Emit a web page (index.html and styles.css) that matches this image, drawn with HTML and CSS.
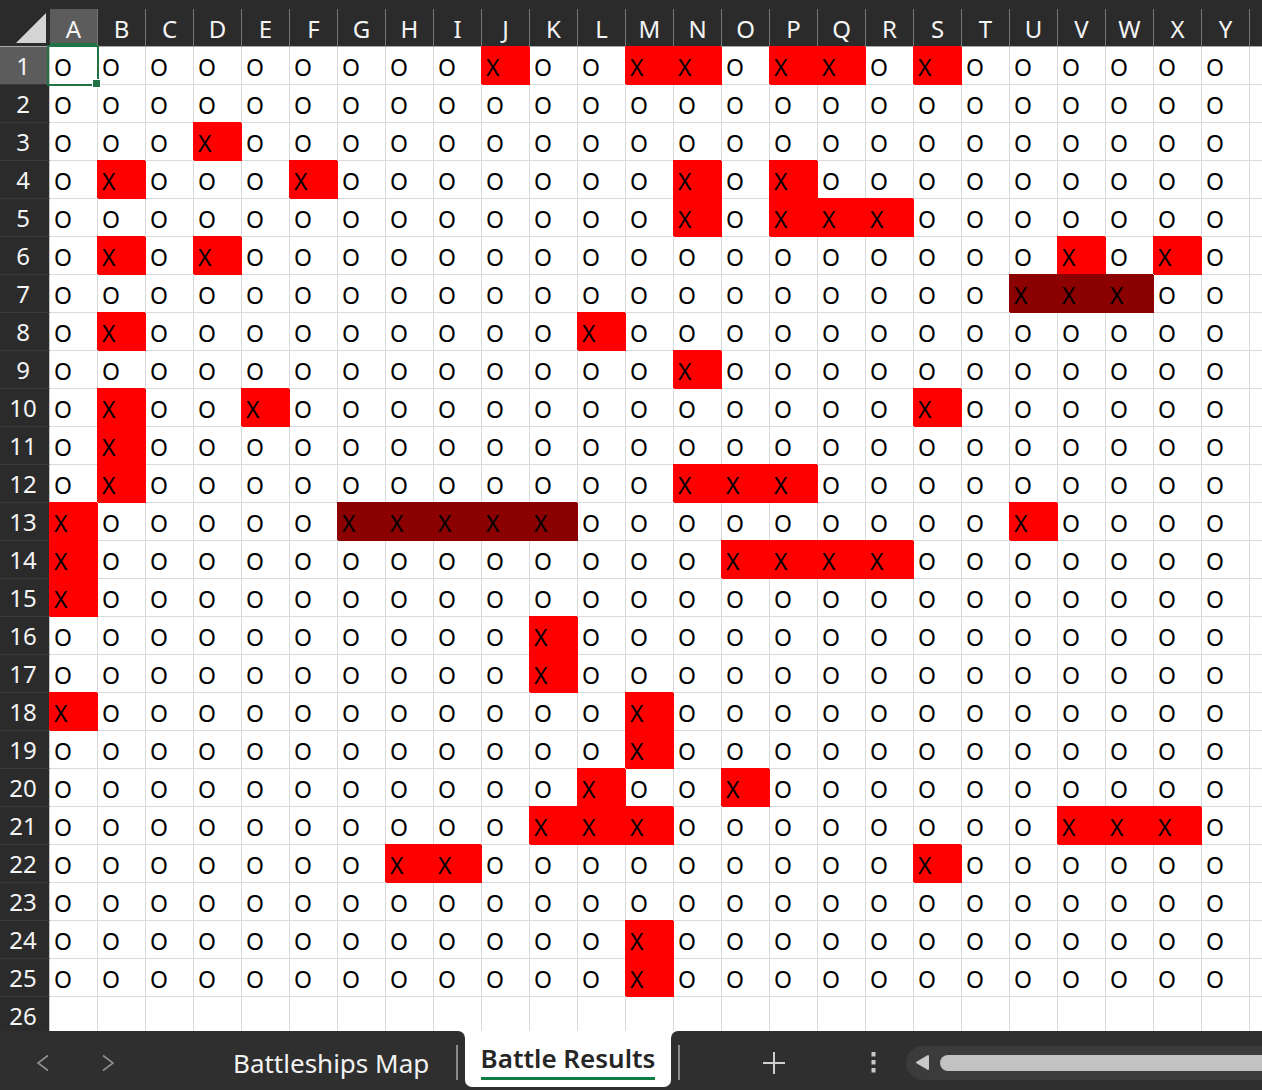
FILE: index.html
```html
<!DOCTYPE html>
<html lang="en">
<head>
<meta charset="utf-8">
<title>Battle Results</title>
<link rel="stylesheet" href="styles.css">
</head>
<body>
<div class="app">
  <div class="ribbon-edge"></div>
  <div class="sheet">
    <div class="row cols">
      <span class="corner"><svg width="50" height="37" viewBox="0 0 50 37"><polygon points="16,34 46,34 46,4" fill="#d4d4d4"/></svg></span>
      <span class="sel">A</span><span>B</span><span>C</span><span>D</span><span>E</span><span>F</span><span>G</span><span>H</span><span>I</span><span>J</span><span>K</span><span>L</span><span>M</span><span>N</span><span>O</span><span>P</span><span>Q</span><span>R</span><span>S</span><span>T</span><span>U</span><span>V</span><span>W</span><span>X</span><span>Y</span><span></span>
    </div>
    <div class="row"><span class="rh sel">1</span><span>O</span><span>O</span><span>O</span><span>O</span><span>O</span><span>O</span><span>O</span><span>O</span><span>O</span><span class="h">X</span><span>O</span><span>O</span><span class="h">X</span><span class="h">X</span><span>O</span><span class="h">X</span><span class="h">X</span><span>O</span><span class="h">X</span><span>O</span><span>O</span><span>O</span><span>O</span><span>O</span><span>O</span><span></span></div>
    <div class="row"><span class="rh">2</span><span>O</span><span>O</span><span>O</span><span>O</span><span>O</span><span>O</span><span>O</span><span>O</span><span>O</span><span>O</span><span>O</span><span>O</span><span>O</span><span>O</span><span>O</span><span>O</span><span>O</span><span>O</span><span>O</span><span>O</span><span>O</span><span>O</span><span>O</span><span>O</span><span>O</span><span></span></div>
    <div class="row"><span class="rh">3</span><span>O</span><span>O</span><span>O</span><span class="h">X</span><span>O</span><span>O</span><span>O</span><span>O</span><span>O</span><span>O</span><span>O</span><span>O</span><span>O</span><span>O</span><span>O</span><span>O</span><span>O</span><span>O</span><span>O</span><span>O</span><span>O</span><span>O</span><span>O</span><span>O</span><span>O</span><span></span></div>
    <div class="row"><span class="rh">4</span><span>O</span><span class="h">X</span><span>O</span><span>O</span><span>O</span><span class="h">X</span><span>O</span><span>O</span><span>O</span><span>O</span><span>O</span><span>O</span><span>O</span><span class="h">X</span><span>O</span><span class="h">X</span><span>O</span><span>O</span><span>O</span><span>O</span><span>O</span><span>O</span><span>O</span><span>O</span><span>O</span><span></span></div>
    <div class="row"><span class="rh">5</span><span>O</span><span>O</span><span>O</span><span>O</span><span>O</span><span>O</span><span>O</span><span>O</span><span>O</span><span>O</span><span>O</span><span>O</span><span>O</span><span class="h">X</span><span>O</span><span class="h">X</span><span class="h">X</span><span class="h">X</span><span>O</span><span>O</span><span>O</span><span>O</span><span>O</span><span>O</span><span>O</span><span></span></div>
    <div class="row"><span class="rh">6</span><span>O</span><span class="h">X</span><span>O</span><span class="h">X</span><span>O</span><span>O</span><span>O</span><span>O</span><span>O</span><span>O</span><span>O</span><span>O</span><span>O</span><span>O</span><span>O</span><span>O</span><span>O</span><span>O</span><span>O</span><span>O</span><span>O</span><span class="h">X</span><span>O</span><span class="h">X</span><span>O</span><span></span></div>
    <div class="row"><span class="rh">7</span><span>O</span><span>O</span><span>O</span><span>O</span><span>O</span><span>O</span><span>O</span><span>O</span><span>O</span><span>O</span><span>O</span><span>O</span><span>O</span><span>O</span><span>O</span><span>O</span><span>O</span><span>O</span><span>O</span><span>O</span><span class="s">X</span><span class="s">X</span><span class="s">X</span><span>O</span><span>O</span><span></span></div>
    <div class="row"><span class="rh">8</span><span>O</span><span class="h">X</span><span>O</span><span>O</span><span>O</span><span>O</span><span>O</span><span>O</span><span>O</span><span>O</span><span>O</span><span class="h">X</span><span>O</span><span>O</span><span>O</span><span>O</span><span>O</span><span>O</span><span>O</span><span>O</span><span>O</span><span>O</span><span>O</span><span>O</span><span>O</span><span></span></div>
    <div class="row"><span class="rh">9</span><span>O</span><span>O</span><span>O</span><span>O</span><span>O</span><span>O</span><span>O</span><span>O</span><span>O</span><span>O</span><span>O</span><span>O</span><span>O</span><span class="h">X</span><span>O</span><span>O</span><span>O</span><span>O</span><span>O</span><span>O</span><span>O</span><span>O</span><span>O</span><span>O</span><span>O</span><span></span></div>
    <div class="row"><span class="rh">10</span><span>O</span><span class="h">X</span><span>O</span><span>O</span><span class="h">X</span><span>O</span><span>O</span><span>O</span><span>O</span><span>O</span><span>O</span><span>O</span><span>O</span><span>O</span><span>O</span><span>O</span><span>O</span><span>O</span><span class="h">X</span><span>O</span><span>O</span><span>O</span><span>O</span><span>O</span><span>O</span><span></span></div>
    <div class="row"><span class="rh">11</span><span>O</span><span class="h">X</span><span>O</span><span>O</span><span>O</span><span>O</span><span>O</span><span>O</span><span>O</span><span>O</span><span>O</span><span>O</span><span>O</span><span>O</span><span>O</span><span>O</span><span>O</span><span>O</span><span>O</span><span>O</span><span>O</span><span>O</span><span>O</span><span>O</span><span>O</span><span></span></div>
    <div class="row"><span class="rh">12</span><span>O</span><span class="h">X</span><span>O</span><span>O</span><span>O</span><span>O</span><span>O</span><span>O</span><span>O</span><span>O</span><span>O</span><span>O</span><span>O</span><span class="h">X</span><span class="h">X</span><span class="h">X</span><span>O</span><span>O</span><span>O</span><span>O</span><span>O</span><span>O</span><span>O</span><span>O</span><span>O</span><span></span></div>
    <div class="row"><span class="rh">13</span><span class="h">X</span><span>O</span><span>O</span><span>O</span><span>O</span><span>O</span><span class="s">X</span><span class="s">X</span><span class="s">X</span><span class="s">X</span><span class="s">X</span><span>O</span><span>O</span><span>O</span><span>O</span><span>O</span><span>O</span><span>O</span><span>O</span><span>O</span><span class="h">X</span><span>O</span><span>O</span><span>O</span><span>O</span><span></span></div>
    <div class="row"><span class="rh">14</span><span class="h">X</span><span>O</span><span>O</span><span>O</span><span>O</span><span>O</span><span>O</span><span>O</span><span>O</span><span>O</span><span>O</span><span>O</span><span>O</span><span>O</span><span class="h">X</span><span class="h">X</span><span class="h">X</span><span class="h">X</span><span>O</span><span>O</span><span>O</span><span>O</span><span>O</span><span>O</span><span>O</span><span></span></div>
    <div class="row"><span class="rh">15</span><span class="h">X</span><span>O</span><span>O</span><span>O</span><span>O</span><span>O</span><span>O</span><span>O</span><span>O</span><span>O</span><span>O</span><span>O</span><span>O</span><span>O</span><span>O</span><span>O</span><span>O</span><span>O</span><span>O</span><span>O</span><span>O</span><span>O</span><span>O</span><span>O</span><span>O</span><span></span></div>
    <div class="row"><span class="rh">16</span><span>O</span><span>O</span><span>O</span><span>O</span><span>O</span><span>O</span><span>O</span><span>O</span><span>O</span><span>O</span><span class="h">X</span><span>O</span><span>O</span><span>O</span><span>O</span><span>O</span><span>O</span><span>O</span><span>O</span><span>O</span><span>O</span><span>O</span><span>O</span><span>O</span><span>O</span><span></span></div>
    <div class="row"><span class="rh">17</span><span>O</span><span>O</span><span>O</span><span>O</span><span>O</span><span>O</span><span>O</span><span>O</span><span>O</span><span>O</span><span class="h">X</span><span>O</span><span>O</span><span>O</span><span>O</span><span>O</span><span>O</span><span>O</span><span>O</span><span>O</span><span>O</span><span>O</span><span>O</span><span>O</span><span>O</span><span></span></div>
    <div class="row"><span class="rh">18</span><span class="h">X</span><span>O</span><span>O</span><span>O</span><span>O</span><span>O</span><span>O</span><span>O</span><span>O</span><span>O</span><span>O</span><span>O</span><span class="h">X</span><span>O</span><span>O</span><span>O</span><span>O</span><span>O</span><span>O</span><span>O</span><span>O</span><span>O</span><span>O</span><span>O</span><span>O</span><span></span></div>
    <div class="row"><span class="rh">19</span><span>O</span><span>O</span><span>O</span><span>O</span><span>O</span><span>O</span><span>O</span><span>O</span><span>O</span><span>O</span><span>O</span><span>O</span><span class="h">X</span><span>O</span><span>O</span><span>O</span><span>O</span><span>O</span><span>O</span><span>O</span><span>O</span><span>O</span><span>O</span><span>O</span><span>O</span><span></span></div>
    <div class="row"><span class="rh">20</span><span>O</span><span>O</span><span>O</span><span>O</span><span>O</span><span>O</span><span>O</span><span>O</span><span>O</span><span>O</span><span>O</span><span class="h">X</span><span>O</span><span>O</span><span class="h">X</span><span>O</span><span>O</span><span>O</span><span>O</span><span>O</span><span>O</span><span>O</span><span>O</span><span>O</span><span>O</span><span></span></div>
    <div class="row"><span class="rh">21</span><span>O</span><span>O</span><span>O</span><span>O</span><span>O</span><span>O</span><span>O</span><span>O</span><span>O</span><span>O</span><span class="h">X</span><span class="h">X</span><span class="h">X</span><span>O</span><span>O</span><span>O</span><span>O</span><span>O</span><span>O</span><span>O</span><span>O</span><span class="h">X</span><span class="h">X</span><span class="h">X</span><span>O</span><span></span></div>
    <div class="row"><span class="rh">22</span><span>O</span><span>O</span><span>O</span><span>O</span><span>O</span><span>O</span><span>O</span><span class="h">X</span><span class="h">X</span><span>O</span><span>O</span><span>O</span><span>O</span><span>O</span><span>O</span><span>O</span><span>O</span><span>O</span><span class="h">X</span><span>O</span><span>O</span><span>O</span><span>O</span><span>O</span><span>O</span><span></span></div>
    <div class="row"><span class="rh">23</span><span>O</span><span>O</span><span>O</span><span>O</span><span>O</span><span>O</span><span>O</span><span>O</span><span>O</span><span>O</span><span>O</span><span>O</span><span>O</span><span>O</span><span>O</span><span>O</span><span>O</span><span>O</span><span>O</span><span>O</span><span>O</span><span>O</span><span>O</span><span>O</span><span>O</span><span></span></div>
    <div class="row"><span class="rh">24</span><span>O</span><span>O</span><span>O</span><span>O</span><span>O</span><span>O</span><span>O</span><span>O</span><span>O</span><span>O</span><span>O</span><span>O</span><span class="h">X</span><span>O</span><span>O</span><span>O</span><span>O</span><span>O</span><span>O</span><span>O</span><span>O</span><span>O</span><span>O</span><span>O</span><span>O</span><span></span></div>
    <div class="row"><span class="rh">25</span><span>O</span><span>O</span><span>O</span><span>O</span><span>O</span><span>O</span><span>O</span><span>O</span><span>O</span><span>O</span><span>O</span><span>O</span><span class="h">X</span><span>O</span><span>O</span><span>O</span><span>O</span><span>O</span><span>O</span><span>O</span><span>O</span><span>O</span><span>O</span><span>O</span><span>O</span><span></span></div>
    <div class="row"><span class="rh">26</span><span></span><span></span><span></span><span></span><span></span><span></span><span></span><span></span><span></span><span></span><span></span><span></span><span></span><span></span><span></span><span></span><span></span><span></span><span></span><span></span><span></span><span></span><span></span><span></span><span></span><span></span></div>
    <div class="selection"><div class="handle"></div></div>
  </div>
  <div class="tabs">
    <div class="tabs-left">
      <svg class="nav prev" width="14" height="18" viewBox="0 0 14 18"><path d="M12 1.5 L2 9 L12 16.5" fill="none" stroke="#8f8f8f" stroke-width="1.6"/></svg>
      <svg class="nav next" width="14" height="18" viewBox="0 0 14 18"><path d="M2 1.5 L12 9 L2 16.5" fill="none" stroke="#8f8f8f" stroke-width="1.6"/></svg>
      <span class="tab">Battleships Map</span>
      <span class="sep"></span>
    </div>
    <div class="tab-active"><span class="tab-label">Battle Results</span></div>
    <div class="tabs-right">
      <span class="sep sep-right"></span>
      <svg class="plus" width="22" height="22" viewBox="0 0 22 22"><path d="M11 0 V22 M0 11 H22" stroke="#cfcfcf" stroke-width="2"/></svg>
      <svg class="dots" width="5" height="21" viewBox="0 0 5 21"><rect x="0.5" y="0" width="4" height="4.5" fill="#c8c8c8"/><rect x="0.5" y="8" width="4" height="4.5" fill="#c8c8c8"/><rect x="0.5" y="16" width="4" height="4.5" fill="#c8c8c8"/></svg>
      <div class="scroll">
        <svg class="scroll-arrow" width="15" height="17" viewBox="0 0 15 17"><path d="M13 2 L13 15 L2 8.5 Z" fill="#c8c8c8" stroke="#c8c8c8" stroke-width="2" stroke-linejoin="round"/></svg>
        <div class="thumb"></div>
      </div>
    </div>
  </div>
</div>
</body>
</html>
```

FILE: styles.css
```css
* {
  box-sizing: border-box;
  margin: 0;
  padding: 0;
}

html, body {
  width: 1262px;
  height: 1090px;
  overflow: hidden;
  background: #2b2b2b;
}

body {
  font-family: "Noto Sans", "Open Sans", sans-serif;
}

.app {
  display: flex;
  flex-direction: column;
  height: 1090px;
}

.ribbon-edge {
  flex: none;
  height: 9px;
  background: #2b2b2b;
}

.sheet {
  position: relative;
  flex: none;
  height: 1022px;
  overflow: hidden;
  background: #fff;
}

.row {
  display: flex;
  height: 38px;
}

.row span {
  flex: none;
  width: 48px;
  height: 38px;
  border-right: 1px solid #dadada;
  border-bottom: 1px solid #dadada;
  padding: 2px 0 0 4px;
  font-size: 23px;
  line-height: 36px;
  color: #000;
  white-space: nowrap;
  overflow: hidden;
}

.row .h {
  background: #ff0000;
  border-color: #ff0000;
  box-shadow: -1px -1px 0 #ff0000;
}

.row .s {
  background: #8b0000;
  border-color: #8b0000;
  box-shadow: -1px -1px 0 #8b0000;
}

.cols span {
  background: #2b2b2b;
  color: #f4f4f4;
  border-right-color: #767676;
  border-bottom-color: #a8a8a8;
  font-size: 24px;
  text-align: center;
  padding: 2px 0 0 0;
}

.cols .sel {
  background: #5c5c5c;
  box-shadow: inset 0 -3px 0 #217346;
}

.cols .corner {
  width: 50px;
  padding: 0;
  border-right-color: #2b2b2b;
}

.corner svg {
  display: block;
}

.row .rh {
  width: 50px;
  background: #2b2b2b;
  color: #f4f4f4;
  font-size: 24px;
  text-align: center;
  padding: 1px 3px 0 0;
  border-right-color: #c4c4c4;
  border-bottom-color: #3a3a3a;
}

.row .rh.sel {
  background: #5c5c5c;
}

.selection {
  position: absolute;
  left: 47px;
  top: 36px;
  width: 52px;
  height: 41px;
  border: 2px solid #217346;
}

.handle {
  position: absolute;
  right: -4px;
  bottom: -4px;
  width: 9px;
  height: 9px;
  background: #217346;
  border: 1px solid #fff;
}

.tabs {
  flex: none;
  height: 59px;
  display: flex;
  background: linear-gradient(#fff 0 20px, #2f2f2f 20px);
}

.tabs-left {
  flex: none;
  width: 465px;
  display: flex;
  align-items: center;
  padding-top: 4px;
  background: #2f2f2f;
  border-top-right-radius: 7px;
}

.nav {
  flex: none;
  display: block;
}

.prev {
  margin-left: 36px;
}

.next {
  margin-left: 51px;
}

.tab {
  margin-left: 118px;
  font-size: 26px;
  line-height: 30px;
  color: #f2f2f2;
  white-space: nowrap;
}

.sep {
  flex: none;
  width: 2px;
  height: 35px;
  margin-left: 27px;
  background: #8a8a8a;
}

.tab-active {
  flex: none;
  width: 206px;
  height: 56px;
  background: #fff;
  border-radius: 0 0 7px 7px;
  display: flex;
  justify-content: center;
  align-items: flex-start;
  padding-top: 12px;
}

.tab-label {
  font-size: 26px;
  font-weight: 600;
  line-height: 30px;
  color: #262626;
  padding-bottom: 4px;
  border-bottom: 3px solid #107c41;
  white-space: nowrap;
}

.tabs-right {
  flex: 1;
  display: flex;
  align-items: center;
  padding-top: 4px;
  background: #2f2f2f;
  border-top-left-radius: 7px;
}

.sep-right {
  margin-left: 7px;
}

.plus {
  flex: none;
  display: block;
  margin-left: 83px;
}

.dots {
  flex: none;
  display: block;
  margin-left: 86px;
}

.scroll {
  flex: 1;
  height: 34px;
  margin-left: 30px;
  margin-right: -20px;
  display: flex;
  align-items: center;
  background: #3b3b3b;
  border-radius: 17px;
}

.scroll-arrow {
  flex: none;
  display: block;
  margin-left: 9px;
}

.thumb {
  flex: 1;
  height: 16px;
  margin-left: 10px;
  background: #c2c2c2;
  border-radius: 8px;
}
```
